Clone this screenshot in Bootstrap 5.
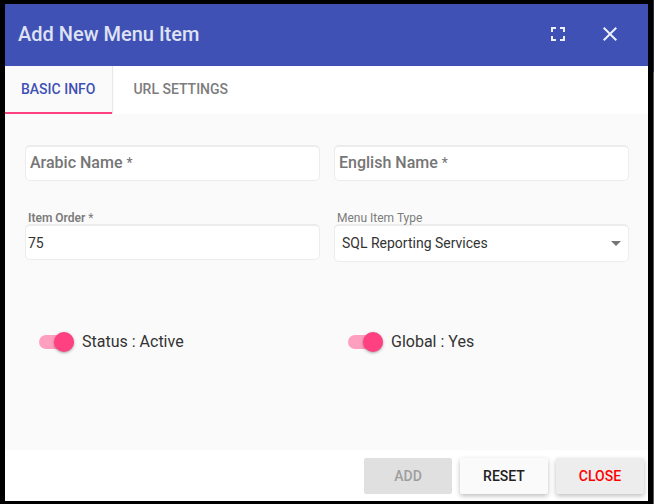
<!DOCTYPE html>
<html lang="en">
<head>
<meta charset="utf-8">
<meta name="viewport" content="width=device-width, initial-scale=1">
<title>Add New Menu Item</title>
<link href="https://cdn.jsdelivr.net/npm/bootstrap@5.3.0/dist/css/bootstrap.min.css" rel="stylesheet">
<style>
  body { font-family: Roboto, "Liberation Sans", sans-serif; font-size: 14px; color: #333; background: linear-gradient(#2b2e3c 72px, #55585c 72px); padding-right: 1px; }
  .dialog-frame { border: solid #000; border-width: 4px 5px 3px; background: #fff; }
  .dialog-head { background: #3f51b5; color: #dfe2f3; height: 62px; padding: 0 26px 2px 13px; }
  .dialog-title { font-size: 20px; font-weight: 500; line-height: 24px; }
  .icon-btn { width: 24px; height: 24px; color: #eceefa; }
  .icon-btn svg { display: block; width: 24px; height: 24px; fill: currentColor; }
  .head-tools { gap: 28px; }
  .info-tabs { height: 48px; }
  .info-tabs .nav-link { height: 48px; padding: 0 20px; color: #7c7c7c; font-weight: 500; border-radius: 0; line-height: 46px; }
  .info-tabs .nav-link.active { background: #fafafa; color: #3f51b5; padding: 0 17px 0 16px; border-right: 1px solid #e8e8e8; box-shadow: inset 0 -2px #ff4081, 1px 0 #fafafa; }
  .form-area { background: #fafafa; padding: 31px 19px 0 20px; }
  .fields { --bs-gutter-x: 14px; }
  .box { height: 36px; padding: 0 2px; font-size: 14px; color: #333; background-color: #fff; border: 1px solid #ececec; border-top-width: 2px; border-radius: 5px; }
  select.box { height: 38px; padding: 0 24px 0 7px; background-size: 10px 5px; background-position: right 7px center;
    background-image: url("data:image/svg+xml,%3Csvg xmlns='http://www.w3.org/2000/svg' viewBox='0 0 10 5'%3E%3Cpath fill='%23757575' d='M0 0h10L5 5z'/%3E%3C/svg%3E"); }
  .stacked > * { grid-area: 1 / 1; }
  .stacked label { z-index: 1; padding-left: 5px; font-size: 16px; font-weight: 500; line-height: 36px; color: #757575; pointer-events: none; justify-self: start; }
  .req { font-weight: 400; font-size: 14px; }
  .cap { display: block; margin-top: 28px; padding: 1px 0 0 3px; font-size: 12px; line-height: 16px; color: #7c7c7c; }
  .cap + .box { margin-top: -2px; }
  .cap .req { font-size: 12px; }
  .toggle-row { margin-top: 68px; padding-left: 14px; gap: 8px; }
  .toggle-row label { font-size: 16px; line-height: 24px; }
  .slide { appearance: none; width: 35px; height: 20px; margin: 0; cursor: pointer; display: inline-grid; align-items: center; border-radius: 10px; }
  .slide::before { content: ""; grid-area: 1 / 1; width: 35px; height: 14px; border-radius: 7px; background: #bdbdbd; }
  .slide::after { content: ""; grid-area: 1 / 1; width: 20px; height: 20px; border-radius: 50%; justify-self: start; background: #fafafa; box-shadow: 0 1px 3px rgba(0,0,0,.35); }
  .slide:checked::before { background: #ff9fc0; }
  .slide:checked::after { justify-self: end; background: #ff4081; }
  .dialog-foot { height: 51px; padding: 1px 4px 0; gap: 8px; }
  .dialog-foot .btn { width: 88px; height: 36px; padding: 0; border: 0; border-radius: 2px; font-size: 14px; font-weight: 500; line-height: 34px; background: #fafafa; color: #212121; box-shadow: 0 2px 5px rgba(0,0,0,.26); }
  .dialog-foot .btn:disabled { background: #e0e0e0; color: #9e9e9e; opacity: 1; box-shadow: none; }
  .dialog-foot .btn-shut { background: #ededed; color: #f00; }
</style>
</head>
<body>
<main class="dialog-frame d-flex flex-column min-vh-100">
  <header class="dialog-head d-flex align-items-center justify-content-between">
    <h1 class="dialog-title mb-0">Add New Menu Item</h1>
    <div class="head-tools d-flex">
      <button type="button" class="icon-btn btn p-0 border-0" aria-label="Full screen"><svg viewBox="0 0 24 24" aria-hidden="true"><path d="M5 5h5v2H7v3H5zM14 5h5v5h-2V7h-3zM5 14h2v3h3v2H5zM17 14h2v5h-5v-2h3z"/></svg></button>
      <button type="button" class="icon-btn btn p-0 border-0" aria-label="Close dialog"><svg viewBox="0 0 24 24" aria-hidden="true"><path d="M19 6.41 17.59 5 12 10.59 6.41 5 5 6.41 10.59 12 5 17.59 6.41 19 12 13.41 17.59 19 19 17.59 13.41 12z"/></svg></button>
    </div>
  </header>
  <nav class="info-tabs nav" aria-label="Sections">
    <a class="nav-link active" aria-current="page" href="#basic">BASIC INFO</a>
    <a class="nav-link" href="#url">URL SETTINGS</a>
  </nav>
  <form class="form-area flex-grow-1" id="basic">
    <div class="fields row">
      <div class="col-6">
        <div class="stacked d-grid">
          <input class="box form-control" type="text" id="arabic" required>
          <label for="arabic">Arabic Name <span class="req">*</span></label>
        </div>
      </div>
      <div class="col-6">
        <div class="stacked d-grid">
          <input class="box form-control" type="text" id="english" required>
          <label for="english">English Name <span class="req">*</span></label>
        </div>
      </div>
      <div class="col-6">
        <label class="cap" for="order"><strong class="fw-semibold">Item Order</strong> <span class="req">*</span></label>
        <input class="box form-control" type="text" inputmode="numeric" id="order" value="75" required>
      </div>
      <div class="col-6">
        <label class="cap" for="type">Menu Item Type</label>
        <select class="box form-select" id="type"><option>SQL Reporting Services</option></select>
      </div>
      <div class="col-6">
        <div class="toggle-row d-flex align-items-center">
          <input class="slide" type="checkbox" role="switch" id="status" checked>
          <label for="status">Status : Active</label>
        </div>
      </div>
      <div class="col-6">
        <div class="toggle-row d-flex align-items-center">
          <input class="slide" type="checkbox" role="switch" id="global" checked>
          <label for="global">Global : Yes</label>
        </div>
      </div>
    </div>
  </form>
  <footer class="dialog-foot d-flex align-items-center justify-content-end">
    <button type="button" class="btn" disabled>ADD</button>
    <button type="button" class="btn">RESET</button>
    <button type="button" class="btn btn-shut">CLOSE</button>
  </footer>
</main>
<script src="https://cdn.jsdelivr.net/npm/bootstrap@5.3.0/dist/js/bootstrap.bundle.min.js"></script>
</body>
</html>
